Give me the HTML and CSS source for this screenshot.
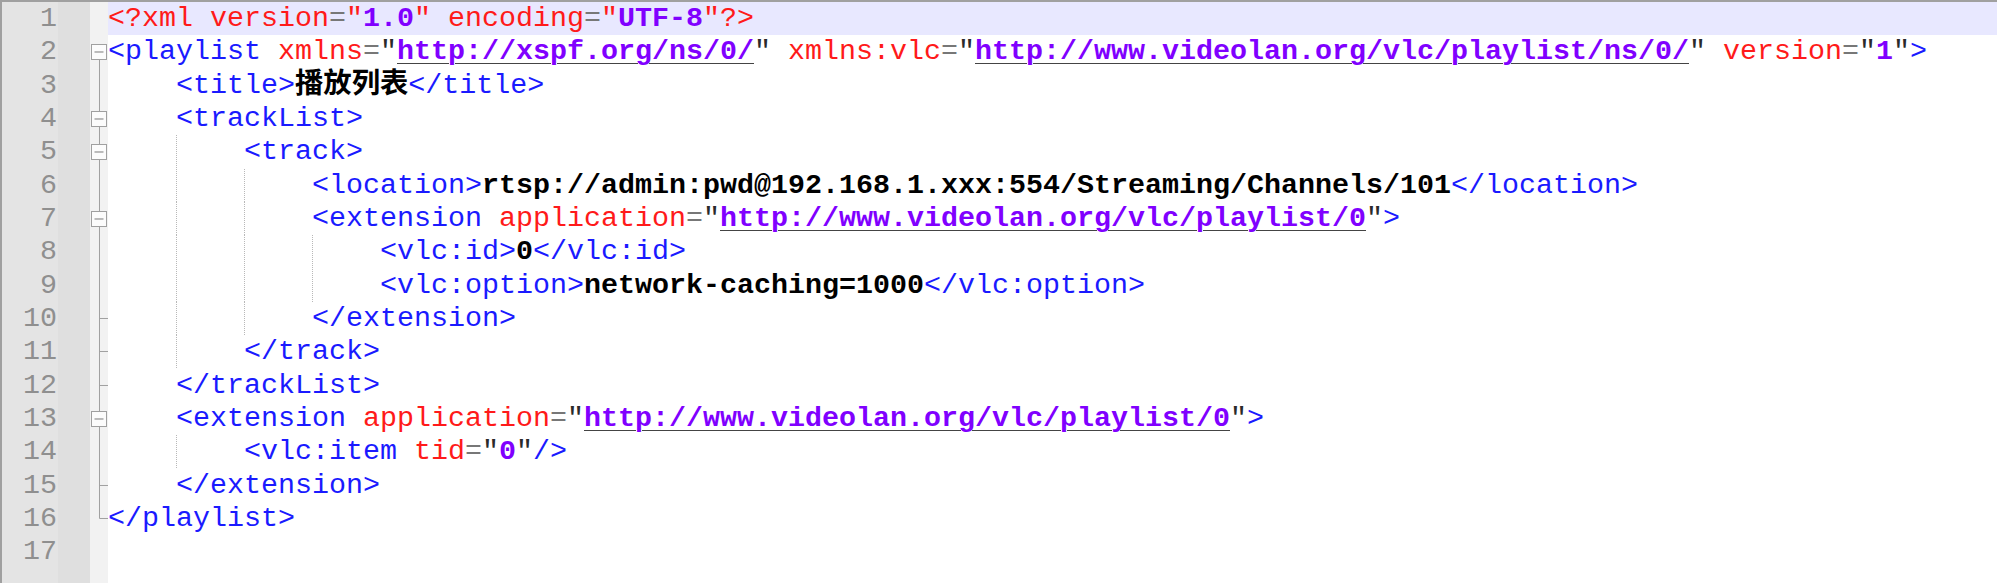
FILE: index.html
```html
<!DOCTYPE html>
<html lang="zh">
<head>
<meta charset="UTF-8">
<title>playlist.xspf</title>
<link rel="stylesheet" href="styles.css">
</head>
<body>
<svg class="defs" width="0" height="0" aria-hidden="true">
  <defs>
    <g id="f-top">
      <rect x="1.5" y="9.5" width="15" height="15" fill="#fcfcfc" stroke="#a0a0a0"/>
      <path d="M4.5 17h9" stroke="#7a7a7a"/>
      <path d="M9.5 24.5V34" stroke="#a0a0a0"/>
    </g>
    <g id="f-start">
      <path d="M9.5 0V9.5" stroke="#a0a0a0"/>
      <rect x="1.5" y="9.5" width="15" height="15" fill="#fcfcfc" stroke="#a0a0a0"/>
      <path d="M4.5 17h9" stroke="#7a7a7a"/>
      <path d="M9.5 24.5V34" stroke="#a0a0a0"/>
    </g>
    <g id="f-mid">
      <path d="M9.5 0V34" stroke="#a0a0a0"/>
    </g>
    <g id="f-end">
      <path d="M9.5 0V34M9.5 16.5H18" stroke="#a0a0a0"/>
    </g>
    <g id="f-last">
      <path d="M9.5 0V16.5H18" stroke="#a0a0a0" fill="none"/>
    </g>
  </defs>
</svg>
<div class="editor">
  <div class="line">
    <div class="ln">1</div><div class="bm"></div><div class="fm"></div>
    <div class="code cur"><span><span class="r">&lt;?xml version</span><span class="eq">=</span><span class="rq">"</span><span class="s">1.0</span><span class="rq">"</span><span class="r"> encoding</span><span class="eq">=</span><span class="rq">"</span><span class="s">UTF-8</span><span class="rq">"</span><span class="r">?&gt;</span></span></div>
  </div>
  <div class="line">
    <div class="ln">2</div><div class="bm"></div><div class="fm"><svg class="fold" viewBox="0 0 18 33.333"><use href="#f-top"/></svg></div>
    <div class="code"><span><span class="t">&lt;playlist</span> <span class="a">xmlns</span><span class="eq">=</span><span class="q">"</span><span class="s u">http://xspf.org/ns/0/</span><span class="q">"</span> <span class="a">xmlns:vlc</span><span class="eq">=</span><span class="q">"</span><span class="s u">http://www.videolan.org/vlc/playlist/ns/0/</span><span class="q">"</span> <span class="a">version</span><span class="eq">=</span><span class="q">"</span><span class="s">1</span><span class="q">"</span><span class="t">&gt;</span></span></div>
  </div>
  <div class="line">
    <div class="ln">3</div><div class="bm"></div><div class="fm"><svg class="fold" viewBox="0 0 18 33.333"><use href="#f-mid"/></svg></div>
    <div class="code"><span class="ind"></span><span><span class="t">&lt;title&gt;</span><span class="b">播放列表</span><span class="t">&lt;/title&gt;</span></span></div>
  </div>
  <div class="line">
    <div class="ln">4</div><div class="bm"></div><div class="fm"><svg class="fold" viewBox="0 0 18 33.333"><use href="#f-start"/></svg></div>
    <div class="code"><span class="ind"></span><span><span class="t">&lt;trackList&gt;</span></span></div>
  </div>
  <div class="line">
    <div class="ln">5</div><div class="bm"></div><div class="fm"><svg class="fold" viewBox="0 0 18 33.333"><use href="#f-start"/></svg></div>
    <div class="code"><span class="ind"></span><span class="ind g"></span><span><span class="t">&lt;track&gt;</span></span></div>
  </div>
  <div class="line">
    <div class="ln">6</div><div class="bm"></div><div class="fm"><svg class="fold" viewBox="0 0 18 33.333"><use href="#f-mid"/></svg></div>
    <div class="code"><span class="ind"></span><span class="ind g"></span><span class="ind g"></span><span><span class="t">&lt;location&gt;</span><span class="b">rtsp://admin:pwd@192.168.1.xxx:554/Streaming/Channels/101</span><span class="t">&lt;/location&gt;</span></span></div>
  </div>
  <div class="line">
    <div class="ln">7</div><div class="bm"></div><div class="fm"><svg class="fold" viewBox="0 0 18 33.333"><use href="#f-start"/></svg></div>
    <div class="code"><span class="ind"></span><span class="ind g"></span><span class="ind g"></span><span><span class="t">&lt;extension</span> <span class="a">application</span><span class="eq">=</span><span class="q">"</span><span class="s u">http://www.videolan.org/vlc/playlist/0</span><span class="q">"</span><span class="t">&gt;</span></span></div>
  </div>
  <div class="line">
    <div class="ln">8</div><div class="bm"></div><div class="fm"><svg class="fold" viewBox="0 0 18 33.333"><use href="#f-mid"/></svg></div>
    <div class="code"><span class="ind"></span><span class="ind g"></span><span class="ind g"></span><span class="ind g"></span><span><span class="t">&lt;vlc:id&gt;</span><span class="b">0</span><span class="t">&lt;/vlc:id&gt;</span></span></div>
  </div>
  <div class="line">
    <div class="ln">9</div><div class="bm"></div><div class="fm"><svg class="fold" viewBox="0 0 18 33.333"><use href="#f-mid"/></svg></div>
    <div class="code"><span class="ind"></span><span class="ind g"></span><span class="ind g"></span><span class="ind g"></span><span><span class="t">&lt;vlc:option&gt;</span><span class="b">network-caching=1000</span><span class="t">&lt;/vlc:option&gt;</span></span></div>
  </div>
  <div class="line">
    <div class="ln">10</div><div class="bm"></div><div class="fm"><svg class="fold" viewBox="0 0 18 33.333"><use href="#f-end"/></svg></div>
    <div class="code"><span class="ind"></span><span class="ind g"></span><span class="ind g"></span><span><span class="t">&lt;/extension&gt;</span></span></div>
  </div>
  <div class="line">
    <div class="ln">11</div><div class="bm"></div><div class="fm"><svg class="fold" viewBox="0 0 18 33.333"><use href="#f-end"/></svg></div>
    <div class="code"><span class="ind"></span><span class="ind g"></span><span><span class="t">&lt;/track&gt;</span></span></div>
  </div>
  <div class="line">
    <div class="ln">12</div><div class="bm"></div><div class="fm"><svg class="fold" viewBox="0 0 18 33.333"><use href="#f-end"/></svg></div>
    <div class="code"><span class="ind"></span><span><span class="t">&lt;/trackList&gt;</span></span></div>
  </div>
  <div class="line">
    <div class="ln">13</div><div class="bm"></div><div class="fm"><svg class="fold" viewBox="0 0 18 33.333"><use href="#f-start"/></svg></div>
    <div class="code"><span class="ind"></span><span><span class="t">&lt;extension</span> <span class="a">application</span><span class="eq">=</span><span class="q">"</span><span class="s u">http://www.videolan.org/vlc/playlist/0</span><span class="q">"</span><span class="t">&gt;</span></span></div>
  </div>
  <div class="line">
    <div class="ln">14</div><div class="bm"></div><div class="fm"><svg class="fold" viewBox="0 0 18 33.333"><use href="#f-mid"/></svg></div>
    <div class="code"><span class="ind"></span><span class="ind g"></span><span><span class="t">&lt;vlc:item</span> <span class="a">tid</span><span class="eq">=</span><span class="q">"</span><span class="s">0</span><span class="q">"</span><span class="t">/&gt;</span></span></div>
  </div>
  <div class="line">
    <div class="ln">15</div><div class="bm"></div><div class="fm"><svg class="fold" viewBox="0 0 18 33.333"><use href="#f-end"/></svg></div>
    <div class="code"><span class="ind"></span><span><span class="t">&lt;/extension&gt;</span></span></div>
  </div>
  <div class="line">
    <div class="ln">16</div><div class="bm"></div><div class="fm"><svg class="fold" viewBox="0 0 18 33.333"><use href="#f-last"/></svg></div>
    <div class="code"><span><span class="t">&lt;/playlist&gt;</span></span></div>
  </div>
  <div class="line">
    <div class="ln">17</div><div class="bm"></div><div class="fm"></div>
    <div class="code"></div>
  </div>
  <div class="filler">
    <div class="ln"></div><div class="bm"></div><div class="fm"></div><div class="code"></div>
  </div>
</div>
</body>
</html>
```

FILE: styles.css
```css
html, body {
  margin: 0;
  padding: 0;
  background: #ffffff;
}

body {
  width: 1997px;
  height: 583px;
  overflow: hidden;
  font-family: "Liberation Mono", "Noto Sans CJK SC", monospace;
  font-size: 28.333px;
}

.defs {
  position: absolute;
  width: 0;
  height: 0;
}

.editor {
  display: flex;
  flex-direction: column;
  height: 583px;
  box-sizing: border-box;
  border-top: 2px solid #a0a0a0;
  border-left: 2px solid #a0a0a0;
}

.line,
.filler {
  display: grid;
  grid-template-columns: 56px 32px 18px 1fr;
}

.line {
  height: 33.333px;
  flex: none;
}

.filler {
  flex: 1;
}

.ln {
  background: #e4e4e4;
  color: #8f8f8f;
  text-align: right;
  padding-right: 1px;
  line-height: 33.333px;
}

.bm {
  background: #dfdfdf;
}

.fm {
  background: #f2f2f2;
}

.fold {
  display: block;
  width: 18px;
  height: 33.333px;
  overflow: visible;
}

.code {
  display: flex;
  white-space: pre;
  line-height: 33.333px;
}

.code.cur {
  background: #e8e8ff;
}

.ind {
  flex: none;
  width: 68px;
}

.ind.g {
  background: repeating-linear-gradient(to bottom, #b8b8b8 0 1px, transparent 1px 2px) no-repeat 0 0 / 1px 100%;
}

.t { color: #1a1aff; }
.a { color: #ff1a1a; }
.r { color: #ff1a1a; }
.rq { color: #ff1a1a; }
.eq { color: #777777; }
.q { color: #2a2a2a; }
.s { color: #8000ff; font-weight: bold; }
.b { color: #000000; font-weight: bold; }

.u {
  text-decoration: underline;
  text-decoration-color: #444444;
  text-decoration-thickness: 1px;
  text-underline-offset: 4px;
}
```
